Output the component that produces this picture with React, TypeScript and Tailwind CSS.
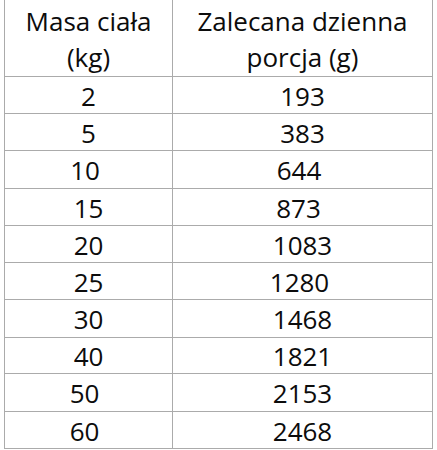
import React from "react";

const rows: { a: string; b: string; h: string; sa: string; sb: string }[] = [
  { a: "2", b: "193", h: "h-[37px]", sa: "", sb: "" },
  { a: "5", b: "383", h: "h-[37px]", sa: "", sb: "" },
  { a: "10", b: "644", h: "h-[38px]", sa: "pr-[7px]", sb: "pr-[7px]" },
  { a: "15", b: "873", h: "h-[37px]", sa: "", sb: "pr-[8px]" },
  { a: "20", b: "1083", h: "h-[37px]", sa: "", sb: "" },
  { a: "25", b: "1280", h: "h-[37px]", sa: "", sb: "pr-[6px]" },
  { a: "30", b: "1468", h: "h-[38px]", sa: "", sb: "" },
  { a: "40", b: "1821", h: "h-[36px]", sa: "", sb: "" },
  { a: "50", b: "2153", h: "h-[38px]", sa: "pr-[8px]", sb: "" },
  { a: "60", b: "2468", h: "h-[37px]", sa: "pr-[8px]", sb: "" },
];

export default function App() {
  return (
    <div className="w-[437px] h-[450px] bg-white overflow-hidden text-[#0c0c0c] font-['Open_Sans',sans-serif] text-[26px]">
      <div className="ml-[4px] w-[429px] border-l border-r border-[#ababab]">
        <div className="flex h-[77px] border-b border-[#ababab] leading-[36px]">
          <div className="w-[167px] pt-[3px] text-center">
            Masa ciała
            <br />
            (kg)
          </div>
          <div className="flex-1 pt-[3px] text-center border-l border-[#ababab]">
            Zalecana dzienna
            <br />
            porcja (g)
          </div>
        </div>
        {rows.map((r) => (
          <div key={r.a} className={`flex border-b border-[#ababab] leading-[36px] ${r.h}`}>
            <div className={`w-[167px] flex items-center justify-center pt-[1px] ${r.sa}`}>{r.a}</div>
            <div className={`flex-1 flex items-center justify-center pt-[1px] border-l border-[#ababab] ${r.sb}`}>
              {r.b}
            </div>
          </div>
        ))}
      </div>
    </div>
  );
}
